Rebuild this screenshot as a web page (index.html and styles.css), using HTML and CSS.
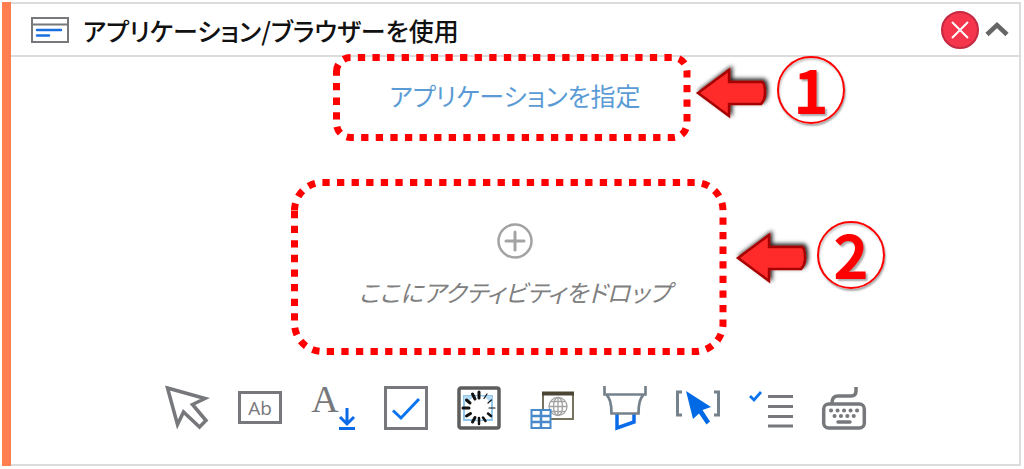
FILE: index.html
```html
<!DOCTYPE html>
<html lang="ja">
<head>
  <meta charset="UTF-8">
  <meta name="viewport" content="width=device-width, initial-scale=1.0">
  <title>アプリケーション/ブラウザーを使用</title>
  <link rel="stylesheet" href="styles.css">
</head>
<body>

<main class="card">
  <header class="card-header">
    <svg class="window-icon" width="38" height="26" viewBox="0 0 38 26" fill="none">
      <rect x="1" y="1" width="36" height="24" stroke="#77787c" stroke-width="2"/>
      <path d="M1 7.500H37" stroke="#77787c" stroke-width="2"/>
      <path d="M6 13H30M6 18.500H18" stroke="#1a6fe0" stroke-width="2.500" stroke-linecap="round"/>
    </svg>
    <h1>アプリケーション/ブラウザーを使用</h1>
    <button class="icon-btn" aria-label="エラー">
      <svg width="38" height="38" viewBox="0 0 38 38" fill="none">
        <circle cx="19" cy="19" r="18" fill="#f4354b" stroke="#c42a40" stroke-width="2"/>
        <path d="M11 11L27 27M27 11L11 27" stroke="#fff" stroke-width="2"/>
      </svg>
    </button>
    <button class="icon-btn" aria-label="折りたたむ">
      <svg width="24" height="16" viewBox="0 0 24 16" fill="none">
        <path d="M2 12.500L12 3L22 12.500" stroke="#666" stroke-width="4.500"/>
      </svg>
    </button>
  </header>

  <section class="card-body">
    <div class="target">
      <a href="#">アプリケーションを指定</a>
      <svg class="frame" width="358" height="88" viewBox="0 0 358 88">
        <path d="M3.500 18.500a14 14 0 0 1 14-14H340a14 14 0 0 1 14 14V70.500a14 14 0 0 1-14 14H17.500a14 14 0 0 1-14-14Z"/>
      </svg>
      <div class="callout">
        <svg width="82" height="62" viewBox="0 0 82 62">
          <use href="#arrow"/>
        </svg>
        <span class="number">1</span>
      </div>
    </div>

    <div class="drop">
      <button class="drop-btn">
        <svg width="36" height="36" viewBox="0 0 36 36" fill="none" stroke="#a3a3a3">
          <circle cx="18" cy="18" r="16.500" stroke-width="2.500"/>
          <path d="M18 9V27M9 18H27" stroke-width="3" stroke-linecap="round"/>
        </svg>
        <span>ここにアクティビティをドロップ</span>
      </button>
      <svg class="frame" width="436" height="176" viewBox="0 0 436 176">
        <path d="M3.500 31.500a28 28 0 0 1 28-28H404a28 28 0 0 1 28 28V144.500a28 28 0 0 1-28 28H31.500a28 28 0 0 1-28-28Z"/>
      </svg>
      <div class="callout">
        <svg width="82" height="62" viewBox="0 0 82 62">
          <use href="#arrow"/>
        </svg>
        <span class="number">2</span>
      </div>
    </div>

    <nav class="toolbar">
      <button class="icon-btn" aria-label="クリック">
        <svg width="44" height="44" viewBox="0 0 44 44" fill="none" stroke="#77787c" stroke-width="3.500">
          <path d="M2.500 2L40 12.500L27.500 18.500L41 34.500L34.500 41L18.500 26L12.500 38.500Z"/>
        </svg>
      </button>
      <button class="icon-btn" aria-label="文字を入力">
        <svg width="44" height="44" viewBox="0 0 44 44">
          <rect x="1.500" y="6.500" width="41" height="30" fill="none" stroke="#77787c" stroke-width="3"/>
          <text class="ab" x="22" y="29" text-anchor="middle">Ab</text>
        </svg>
      </button>
      <button class="icon-btn" aria-label="テキストを取得">
        <svg width="44" height="44" viewBox="0 0 44 44">
          <text class="letter" x="14" y="26" text-anchor="middle">A</text>
          <path d="M36 22V37M29 31L36 38L43 31M28 42.500H44" fill="none" stroke="#0a6be8" stroke-width="3"/>
        </svg>
      </button>
      <button class="icon-btn" aria-label="チェック">
        <svg width="44" height="44" viewBox="0 0 44 44" fill="none">
          <rect x="1.500" y="1.500" width="41" height="41" stroke="#77787c" stroke-width="3"/>
          <path d="M9 24.500L17 32L35 13" stroke="#0a73f0" stroke-width="3"/>
        </svg>
      </button>
      <button class="icon-btn" aria-label="ステートを確認">
        <svg width="44" height="44" viewBox="0 0 44 44" fill="none">
          <rect x="2" y="2" width="40" height="40" rx="2" stroke="#5d5d5d" stroke-width="3.500"/>
          <rect x="7" y="10" width="28" height="24" stroke="#91c5ea" stroke-width="2"/>
          <path d="M7 13H35" stroke="#b5daf3" stroke-width="6"/>
          <circle cx="22" cy="22" r="12" fill="#fff"/>
          <g stroke="#111" stroke-linecap="round">
            <path d="M22 6V12M15.500 8L18 13M9.500 14L13 17M6 22H12M9.500 30L13.500 27.500M15.500 36L18 31.500" stroke-width="3"/>
            <path d="M22 38V32M28.500 35L26 31.500M34 30L31 27.500" stroke-width="2.500"/>
            <path d="M38 22H32M34.500 14L31 17M30 8L27 12.500" stroke-width="1.200"/>
          </g>
        </svg>
      </button>
      <button class="icon-btn" aria-label="表データを抽出">
        <svg width="44" height="44" viewBox="0 0 44 44" fill="none">
          <rect x="13" y="7" width="30" height="26" stroke="#77725f" stroke-width="2"/>
          <path d="M12 7.500H44" stroke="#4b4534" stroke-width="4"/>
          <g stroke="#a2a2a2" stroke-width="1.300">
            <circle cx="28" cy="20.500" r="9"/>
            <ellipse cx="28" cy="20.500" rx="4.500" ry="9"/>
            <path d="M28 11.500V29.500M19 20.500H37M21 15.500H35M21 25.500H35"/>
          </g>
          <rect x="1.500" y="24" width="19" height="18" fill="#fff" stroke="#4889c9" stroke-width="2"/>
          <path d="M11 24V42M1.500 30H20.500M1.500 36H20.500" stroke="#4889c9" stroke-width="2.500"/>
        </svg>
      </button>
      <button class="icon-btn" aria-label="ハイライト">
        <svg width="44" height="44" viewBox="0 0 44 44" fill="none">
          <path d="M14 28V42L31 36V28" stroke="#0a6be8" stroke-width="3.500"/>
          <path d="M1.500 0V8.500H42.500V0M3.500 9Q8.500 13 8.500 27.500H35.500Q35.500 13 40.500 9" stroke="#75828b" stroke-width="2.700"/>
        </svg>
      </button>
      <button class="icon-btn" aria-label="要素の有無を確認">
        <svg width="44" height="44" viewBox="0 0 44 44" fill="none">
          <path d="M6 6H1.500V29H6M38 6H42.500V29H38" stroke="#75828b" stroke-width="3"/>
          <path d="M10 5L35 21L26.500 24L34 35.500L30.500 38.500L23 27.500L17 33Z" fill="#0069e5"/>
        </svg>
      </button>
      <button class="icon-btn" aria-label="項目を選択">
        <svg width="44" height="44" viewBox="0 0 44 44" fill="none">
          <path d="M1 10L5 14L12 6" stroke="#0a73f0" stroke-width="2.700"/>
          <path d="M19 10.500H44M19 20.500H44M19 30.500H44M19 40H44" stroke="#77787c" stroke-width="3"/>
        </svg>
      </button>
      <button class="icon-btn" aria-label="キーボードショートカット">
        <svg width="44" height="44" viewBox="0 0 44 44" fill="none" stroke="#77787c">
          <rect x="1.700" y="18" width="40.600" height="24" rx="5" stroke-width="3.500"/>
          <path d="M10 17Q10 10 16 10H29Q34 10 34 5V1" stroke-width="3.500"/>
          <path d="M9 24.500H36" stroke-width="4" stroke-linecap="round" stroke-dasharray="0.100 6.400"/>
          <path d="M12.500 30H32" stroke-width="4" stroke-linecap="round" stroke-dasharray="0.100 6.300"/>
          <path d="M16 36H28" stroke-width="3.500" stroke-linecap="round"/>
        </svg>
      </button>
    </nav>
  </section>
</main>

<!-- shared arrow shape for the callouts -->
<svg class="defs" width="0" height="0" aria-hidden="true">
  <defs>
    <filter id="glow" x="-20%" y="-20%" width="150%" height="150%">
      <feDropShadow dx="2" dy="-2" stdDeviation="2" flood-color="#000" flood-opacity="0.9"/>
    </filter>
    <path id="arrow" d="M3 31L34 8V20H67Q70 21 70 31Q70 38 66 42H34V54Z"
          fill="#ff2b2b" stroke="#a80000" stroke-width="2.500" filter="url(#glow)"/>
  </defs>
</svg>

</body>
</html>
```
FILE: styles.css
```css
body {
  margin: 0;
  padding: 2px 3px 2px 2px;
  background: #fff;
  font-family: "Noto Sans CJK JP", sans-serif;
  font-feature-settings: "palt";
}

.card {
  margin-left: 9px;
  border: 2px solid #dcdcdc;
  border-left: none;
  box-shadow: -9px 0 0 #ff7f50;
}

.card-header {
  display: flex;
  align-items: center;
  gap: 6px;
  height: 51px;
  padding: 0 10px 0 20px;
  border-bottom: 2px solid #dcdcdc;
}

.card-header h1 {
  flex: 1;
  margin: 0 0 0 8px;
  font-size: 25px;
  line-height: 36px;
  font-weight: 500;
  color: #111;
  white-space: nowrap;
}

button {
  padding: 0;
  border: none;
  background: none;
  font: inherit;
  cursor: pointer;
}

.icon-btn {
  display: flex;
}

.icon-btn svg {
  overflow: visible;
}

.card-body {
  display: flex;
  flex-direction: column;
  align-items: center;
  padding-bottom: 34px;
}

.target,
.drop {
  position: relative;
  display: flex;
  justify-content: center;
  text-align: center;
}

.target {
  width: 350px;
  padding: 20px 0 26px;
}

.target a {
  color: #5b9bd5;
  font-size: 25px;
  line-height: 36px;
  font-weight: 400;
  text-decoration: none;
}

.drop {
  width: 424px;
  margin-top: 44px;
  padding: 40px 0;
}

.drop-btn {
  display: flex;
  flex-direction: column;
  align-items: center;
  gap: 15px;
  color: #808080;
  font-size: 24px;
  line-height: 36px;
  font-weight: 400;
  font-style: italic;
}

/* dotted frames and numbered callouts lie over the card */
.frame {
  position: absolute;
  top: -4px;
  left: -7px;
  fill: none;
  stroke: #f00;
  stroke-width: 7;
  stroke-dasharray: 7.300;
  pointer-events: none;
}

.drop .frame {
  left: -12px;
}

.callout {
  position: absolute;
  top: -1px;
  left: 100%;
  display: flex;
  align-items: flex-end;
  padding-left: 5px;
}

.drop .callout {
  top: 38px;
  padding-left: 8px;
}

.number {
  box-sizing: border-box;
  width: 68px;
  height: 68px;
  border: 2px solid #f00;
  border-radius: 50%;
  box-shadow: 1px 2px 2px #aaa, inset 1px 2px 2px #ccc;
  color: #f00;
  font-size: 60px;
  line-height: 60px;
  font-weight: 700;
  text-align: center;
  text-shadow: 2px 2px 2px #aaa;
}

.toolbar {
  display: flex;
  gap: 29px;
  margin-top: 36px;
}

.ab {
  font-family: "Open Sans", sans-serif;
  font-size: 19px;
  fill: #77787c;
}

.letter {
  font-family: "Liberation Serif", serif;
  font-size: 38px;
  fill: #77787c;
}

.defs {
  position: absolute;
}
```
